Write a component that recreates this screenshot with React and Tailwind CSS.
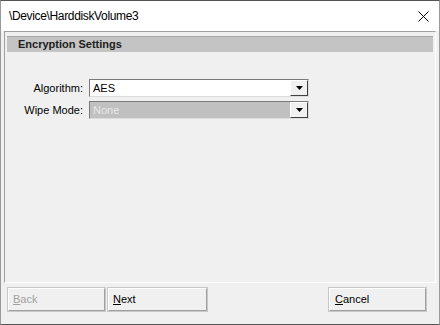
export default function App() {
  const ui = { fontFamily: '"Liberation Sans", Arial, sans-serif' };
  const Arrow = () => (
    <div className="w-[18px] h-full bg-[#f0f0f0] border-t border-l border-t-white border-l-white border-r border-b border-r-[#404040] border-b-[#404040] flex items-center justify-center">
      <svg width="7" height="4" viewBox="0 0 7 4"><path d="M0 0h7L3.5 4z" fill="#000" /></svg>
    </div>
  );
  const btn = "h-[23px] border-t border-l border-t-white border-l-white border-r border-b border-r-[#a0a0a0] border-b-[#a0a0a0] outline outline-1 outline-[#c8c8c8] flex items-center text-[11px]";
  return (
    <div className="w-[440px] h-[325px] bg-[#f0f0f0] border-t border-[#555] border-l border-r border-b border-l-[#9a9a9a] border-r-[#9a9a9a] border-b-[#555] flex flex-col" style={ui}>
      <div className="h-[30px] bg-white flex items-center justify-between pl-[8px] pr-[10px] shrink-0">
        <span className="text-[12px] tracking-[-0.35px] text-black">\Device\HarddiskVolume3</span>
        <svg width="11" height="11" viewBox="0 0 11 11"><path d="M0.5 0.5L10.5 10.5M10.5 0.5L0.5 10.5" stroke="#000" strokeWidth="1" /></svg>
      </div>
      <div className="flex-1 flex flex-col px-[3px] pb-[8px]">
        <div className="h-[252px] border-l border-t border-[#a0a0a0] border-r border-b border-r-white border-b-white pt-[4px] px-[2px] flex flex-col">
          <div className="h-[16px] bg-[#c4c4c4] border-t border-[#a8a8a8] flex items-center pl-[11px]">
            <span className="text-[11px] font-bold text-[#202020]">Encryption Settings</span>
          </div>
          <div className="mt-[27px] flex flex-col gap-[4px]">
            <div className="flex items-center">
              <span className="w-[76px] text-right text-[11px] text-black">Algorithm:</span>
              <div className="ml-[6px] w-[220px] h-[18px] border-t border-l border-[#7a7a7a] border-r border-b border-r-[#dcdcdc] border-b-[#dcdcdc] bg-white flex">
                <div className="flex-1 flex items-center pl-[3px] text-[11px] text-black">AES</div>
                <Arrow />
              </div>
            </div>
            <div className="flex items-center">
              <span className="w-[76px] text-right text-[11px] text-black">Wipe Mode:</span>
              <div className="ml-[6px] w-[220px] h-[18px] border-t border-l border-[#7a7a7a] border-r border-b border-r-[#dcdcdc] border-b-[#dcdcdc] bg-[#c0c0c0] flex">
                <div className="flex-1 flex items-center pl-[3px] text-[11px] text-[#e8e8e8]">None</div>
                <Arrow />
              </div>
            </div>
          </div>
        </div>
        <div className="mt-[5px] flex items-center pl-[4px] pr-[10px]">
          <div className={`${btn} w-[97px] pl-[4px] text-[#a0a0a0]`}><span><u>B</u>ack</span></div>
          <div className={`${btn} ml-[3px] w-[99px] pl-[4px] text-black`}><span><u>N</u>ext</span></div>
          <div className={`${btn} ml-auto w-[97px] pl-[5px] text-black`}><span><u>C</u>ancel</span></div>
        </div>
      </div>
    </div>
  );
}
